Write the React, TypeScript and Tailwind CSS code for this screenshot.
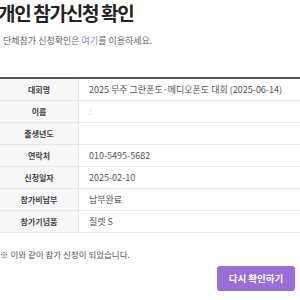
const rows: { label: string; value: string; faint?: boolean }[] = [
  { label: '대회명', value: '2025 무주 그란폰도·메디오폰도 대회 (2025-06-14)' },
  { label: '이름', value: ':', faint: true },
  { label: '출생년도', value: '', faint: true },
  { label: '연락처', value: '010-5495-5682' },
  { label: '신청일자', value: '2025-02-10' },
  { label: '참가비납부', value: '납부완료' },
  { label: '참가기념품', value: '질렛 S' },
];

export default function App() {
  return (
    <div
      className="h-[300px] w-[300px] overflow-hidden bg-white text-[#333]"
      style={{ fontFamily: '"Noto Sans CJK KR", "Noto Sans", sans-serif' }}
    >
      <h1 className="ml-[-2px] mt-[2px] h-[22px] text-[19px] font-bold leading-[22px] tracking-[-1.3px] text-[#222]">
        개인 참가신청 확인
      </h1>
      <p className="ml-[3px] mt-[11px] text-[9px] leading-[12px] text-[#666]">
        단체참가 신청확인은 <span className="text-[#9b7fcb]">여기</span>를 이용하세요.
      </p>

      <div className="mt-[30px] border-t-2 border-[#555]">
        {rows.map((r) => (
          <div key={r.label} className="flex h-[22px] border-b border-[#e8e8e8]">
            <div className="flex w-[79px] items-center justify-center border-r border-[#e8e8e8] bg-[#f7f7f7] text-[8px] font-bold text-[#444]">
              {r.label}
            </div>
            <div
              className={
                r.faint
                  ? 'flex flex-1 items-center pl-[10px] text-[9px] text-[#ccc]'
                  : 'flex flex-1 items-center pl-[10px] text-[9px] text-[#555]'
              }
            >
              {r.value}
            </div>
          </div>
        ))}
      </div>

      <p className="mt-[15px] text-[8.5px] leading-[12px] text-[#555]">※ 이와 같이 참가 신청이 되었습니다.</p>

      <div className="mt-[6px] flex justify-end pr-[5px]">
        <button className="flex h-[25px] w-[78px] items-center justify-center rounded-[3px] bg-[#9a6dd7] text-[9.5px] font-bold text-white">
          다시 확인하기
        </button>
      </div>
    </div>
  );
}
